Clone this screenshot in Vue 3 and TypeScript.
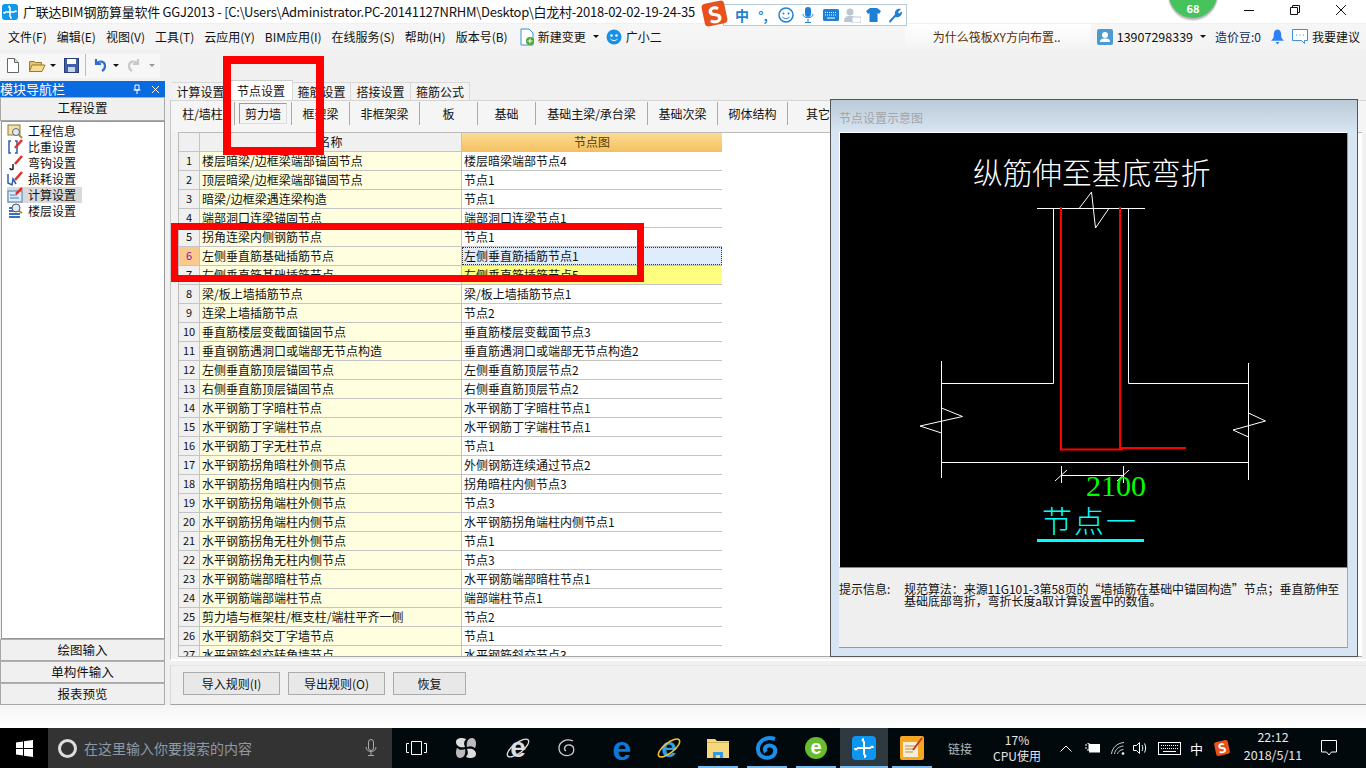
<script setup lang="ts">
const menus: string[] = ['文件(F)', '编辑(E)', '视图(V)', '工具(T)', '云应用(Y)', 'BIM应用(I)', '在线服务(S)', '帮助(H)', '版本号(B)']
const tabs: string[] = ['计算设置', '节点设置', '箍筋设置', '搭接设置', '箍筋公式']
const tabWidths: number[] = [58, 63, 58, 60, 59]
const subs: { t: string; w: number }[] = [
  { t: '柱/墙柱', w: 64 }, { t: '剪力墙', w: 57 }, { t: '框架梁', w: 58 }, { t: '非框架梁', w: 70 },
  { t: '板', w: 58 }, { t: '基础', w: 58 }, { t: '基础主梁/承台梁', w: 112 }, { t: '基础次梁', w: 70 },
  { t: '砌体结构', w: 70 }, { t: '其它', w: 60 },
]
const navItems: string[] = ['工程信息', '比重设置', '弯钩设置', '损耗设置', '计算设置', '楼层设置']
const rows: [string, string][] = [
  ['楼层暗梁/边框梁端部锚固节点', '楼层暗梁端部节点4'],
  ['顶层暗梁/边框梁端部锚固节点', '节点1'],
  ['暗梁/边框梁遇连梁构造', '节点1'],
  ['端部洞口连梁锚固节点', '端部洞口连梁节点1'],
  ['拐角连梁内侧钢筋节点', '节点1'],
  ['左侧垂直筋基础插筋节点', '左侧垂直筋插筋节点1'],
  ['左侧垂直筋基础插筋节点', '左侧垂直筋插筋节点5'],
  ['梁/板上墙插筋节点', '梁/板上墙插筋节点1'],
  ['连梁上墙插筋节点', '节点2'],
  ['垂直筋楼层变截面锚固节点', '垂直筋楼层变截面节点3'],
  ['垂直钢筋遇洞口或端部无节点构造', '垂直筋遇洞口或端部无节点构造2'],
  ['左侧垂直筋顶层锚固节点', '左侧垂直筋顶层节点2'],
  ['右侧垂直筋顶层锚固节点', '右侧垂直筋顶层节点2'],
  ['水平钢筋丁字暗柱节点', '水平钢筋丁字暗柱节点1'],
  ['水平钢筋丁字端柱节点', '水平钢筋丁字端柱节点1'],
  ['水平钢筋丁字无柱节点', '节点1'],
  ['水平钢筋拐角暗柱外侧节点', '外侧钢筋连续通过节点2'],
  ['水平钢筋拐角暗柱内侧节点', '拐角暗柱内侧节点3'],
  ['水平钢筋拐角端柱外侧节点', '节点3'],
  ['水平钢筋拐角端柱内侧节点', '水平钢筋拐角端柱内侧节点1'],
  ['水平钢筋拐角无柱外侧节点', '节点1'],
  ['水平钢筋拐角无柱内侧节点', '节点3'],
  ['水平钢筋端部暗柱节点', '水平钢筋端部暗柱节点1'],
  ['水平钢筋端部端柱节点', '端部端柱节点1'],
  ['剪力墙与框架柱/框支柱/端柱平齐一侧', '节点2'],
  ['水平钢筋斜交丁字墙节点', '节点1'],
  ['水平钢筋斜交转角墙节点', '水平钢筋斜交节点3'],
]
</script>

<template>
  <div class="app">
    <header class="title">
      <svg class="logo" width="16" height="16" viewBox="0 0 16 16">
        <rect width="16" height="16" rx="3" fill="#1296ee" />
        <path d="M8 3V13M3 8h10M8 3.500c-1.500 0-1.500-1.500 0-1.500M3 8c0 1.500-1.500 1.500-1 0M13 8c0-1.500 1.500-1.500 1 0M8 13c1.500 0 1.500 1.500 0 1" stroke="#fff" stroke-width="1.500" fill="none" />
      </svg>
      <span class="title-text">广联达BIM钢筋算量软件 GGJ2013 - [C:\Users\Administrator.PC-20141127NRHM\Desktop\白龙村-2018-02-02-19-24-35</span>
      <div class="winbtns">
        <svg width="12" height="12" viewBox="0 0 12 12"><path d="M1 6.500h10" stroke="#111" /></svg>
        <svg width="12" height="12" viewBox="0 0 12 12"><path d="M1.500 3.500h7v7h-7zM3.500 3.500v-2h7v7h-2" stroke="#111" fill="none" /></svg>
        <svg width="12" height="12" viewBox="0 0 12 12"><path d="M1 1l10 10M11 1L1 11" stroke="#111" /></svg>
      </div>
    </header>

    <nav class="menubar">
      <span v-for="m in menus" :key="m" class="menu-item">{{ m }}</span>
      <svg width="16" height="18" viewBox="0 0 16 18" class="new-ico">
        <path d="M2 1h8l4 4v12H2z" fill="#fff" stroke="#3a8fd8" />
        <circle cx="11" cy="13" r="4" fill="#4da52c" />
        <path d="M11 10.500v5M8.500 13h5" stroke="#fff" />
      </svg>
      <span class="menu-item tight">新建变更</span>
      <span class="caret c1"></span>
      <svg width="16" height="16" viewBox="0 0 16 16" class="gx-ico">
        <circle cx="8" cy="8" r="7.500" fill="#1a8fe6" />
        <circle cx="5.500" cy="6.500" r="1.300" fill="#fff" />
        <circle cx="10.500" cy="6.500" r="1.300" fill="#fff" />
        <path d="M4.500 10c2 2 5 2 7 0" stroke="#fff" fill="none" />
      </svg>
      <span class="menu-item tight">广小二</span>
      <div class="news">为什么筏板XY方向布置..</div>
      <div class="userbar">
        <svg width="16" height="16" viewBox="0 0 16 16">
          <rect width="16" height="16" rx="2" fill="#4d9ad0" />
          <circle cx="8" cy="6" r="3" fill="#fff" />
          <path d="M3 13c0-3 2-3.500 5-3.500s5 .5 5 3.500z" fill="#fff" />
        </svg>
        <span class="phone">13907298339</span>
        <span class="caret c2"></span>
        <span class="bean">造价豆:0</span>
        <svg class="bell" width="13" height="16" viewBox="0 0 14 16">
          <path d="M7 0c3 0 4 3 4 6s1 4 3 6H0c2-2 3-3 3-6s1-6 4-6z" fill="#2f7ff5" />
          <path d="M5 13.500h4L7 16z" fill="#2f7ff5" />
        </svg>
        <svg class="sug" width="16" height="16" viewBox="0 0 16 16">
          <path d="M.5.500h15v11h-3v3l-3-3H.5z" fill="#fff" stroke="#3d8fe0" />
          <path d="M4 6h1M7.500 6h1M11 6h1" stroke="#3d8fe0" />
        </svg>
        <span class="sug-text">我要建议</span>
      </div>
    </nav>

    <div class="toolbar">
      <div class="tool-strip">
        <svg width="12" height="15" viewBox="0 0 12 15" class="t1"><path d="M.5.500h7l4 4v10H.5z" fill="#fff" stroke="#666" /><path d="M7.500.500v4h4" fill="#ddd" stroke="#666" /></svg>
        <svg width="17" height="15" viewBox="0 0 17 15" class="t2"><path d="M.5 3.500h5l1 1h6v9H.5z" fill="#e8c36a" stroke="#9b7a2d" /><path d="M3 7h13l-3 6.500H.5z" fill="#f6dc93" stroke="#9b7a2d" /></svg>
        <span class="caret c3"></span>
        <svg width="15" height="15" viewBox="0 0 15 15" class="t3"><rect x=".5" y=".5" width="14" height="14" fill="#3f5fa8" stroke="#2a3f7a" /><rect x="3" y="1" width="9" height="5" fill="#fff" /><rect x="4" y="9" width="7" height="5" fill="#c9d4e8" /></svg>
        <span class="tool-sep"></span>
        <svg width="14" height="14" viewBox="0 0 14 14" class="t4"><path d="M3 1v5h5M3 6c3-4 9-3 9 2 0 2-1 4-3 5" stroke="#2f6fd0" stroke-width="2.200" fill="none" /></svg>
        <span class="caret c4"></span>
        <svg width="14" height="14" viewBox="0 0 14 14" class="t5"><path d="M11 1v5H6M11 6C8 2 2 3 2 8c0 2 1 4 3 5" stroke="#c9c9c9" stroke-width="2.200" fill="none" /></svg>
        <span class="caret c5"></span>
      </div>
    </div>

    <main class="main">
      <aside class="side">
        <div class="side-head">
          <span>模块导航栏</span>
          <svg width="10" height="10" viewBox="0 0 10 10" class="pin"><path d="M3 1h4v5H3zM1.500 6h7M5 6v4" stroke="#fff" fill="none" /></svg>
          <svg width="9" height="9" viewBox="0 0 9 9" class="close"><path d="M1 1l7 7M8 1L1 8" stroke="#fff" /></svg>
        </div>
        <div class="side-btn first">工程设置</div>
        <ul class="side-list">
          <li v-for="(n, i) in navItems" :key="n" :class="{ sel: i === 4 }">
            <svg width="17" height="16" viewBox="0 0 17 16">
              <template v-if="i === 0">
                <rect x="1" y="2" width="12" height="10" fill="#f3e2a8" stroke="#8a7a3a" />
                <circle cx="9" cy="9" r="3.500" fill="#dfeaf5" stroke="#666" />
                <path d="M12 12l3 3" stroke="#b8862a" stroke-width="2" />
              </template>
              <template v-else-if="i === 4">
                <rect x="1" y="4" width="14" height="11" fill="#dcebfa" stroke="#4a7fb8" />
                <path d="M3 8h7M3 11h9" stroke="#4a7fb8" />
                <path d="M9 7l6-6" stroke="#e0302a" stroke-width="2.500" />
              </template>
              <template v-else-if="i === 5">
                <path d="M2 5h11M2 8h11M2 11h11M2 14h11" stroke="#3a70c0" stroke-width="2" />
                <circle cx="9" cy="5" r="4" fill="#dfeaf5" stroke="#555" />
                <path d="M12 8l3 2" stroke="#b8862a" stroke-width="2" />
              </template>
              <template v-else>
                <path v-if="i === 1" d="M4 2H2v12h2M8 2h2v12H8" stroke="#2f5fa8" stroke-width="1.500" fill="none" />
                <path v-if="i === 2" d="M6 9v5c-2 1-3 0-3-1" stroke="#222" stroke-width="1.500" fill="none" />
                <path v-if="i === 3" d="M1 3v9l4 2 1-6 3 5" stroke="#2f5fa8" stroke-width="1.500" fill="none" />
                <path d="M8 9l7-8" stroke="#e0302a" stroke-width="2.500" />
              </template>
            </svg>
            <span>{{ n }}</span>
          </li>
        </ul>
        <div class="side-btn">绘图输入</div>
        <div class="side-btn">单构件输入</div>
        <div class="side-btn">报表预览</div>
      </aside>

      <section class="work">
        <div class="tabs">
          <span v-for="(t, i) in tabs" :key="t" class="tab" :class="{ active: i === 1 }" :style="{ width: tabWidths[i] + 'px' }">{{ t }}</span>
        </div>
        <div class="pane">
          <div class="subtabs">
            <span v-for="(s, i) in subs" :key="s.t" class="sub" :style="{ width: s.w + 'px' }">
              <span :class="{ pressed: i === 1 }">{{ s.t }}</span>
            </span>
          </div>
          <div class="grid">
            <div class="row head">
              <span class="num"></span>
              <span class="name-h">名称</span>
              <span class="val-h">节点图</span>
            </div>
            <div v-for="(r, i) in rows" :key="i" class="row">
              <span class="num" :class="{ cur: i === 5 }">{{ i + 1 }}</span>
              <span class="name">{{ r[0] }}</span>
              <span class="val" :class="{ focus: i === 5, warn: i === 6 }">{{ r[1] }}</span>
            </div>
          </div>

          <div class="panel">
            <div class="panel-title">节点设置示意图</div>
            <div class="canvas">
              <svg width="507" height="434" viewBox="840 133 507 434">
                <text x="973" y="184" class="c-title">纵筋伸至基底弯折</text>
                <g stroke="#fff" fill="none">
                  <path d="M1037 208.500H1145M1053.500 208V383.500H941.500M1128.500 208V383.500H1248.500M941.500 361V478M1248.500 363V480M941.500 462.500H1248.500" />
                  <path d="M1079.500 208L1091.500 192L1095.500 228L1108.500 209" />
                  <path d="M941.500 408L962.500 416.500L920 426L941.500 433M1248.500 413L1265.500 421L1233 430L1248.500 437" />
                  <path d="M1061.500 466V483M1123.500 466V483M1061.500 475.500H1123.500M1055 481L1067 470M1117 481L1129 470" />
                </g>
                <g stroke="#f00" stroke-width="2" fill="none">
                  <path d="M1061 207V449.500H1123" />
                  <path d="M1120 207V448H1186" />
                </g>
                <text x="1086" y="496" class="c-num">2100</text>
                <text x="1042" y="532" class="c-node">节点一</text>
                <rect x="1037" y="539" width="107" height="3" fill="#0ff" />
              </svg>
            </div>
            <div class="info">
              <span class="info-label">提示信息:</span>
              <p>规范算法：来源11G101-3第58页的“墙插筋在基础中锚固构造”节点；垂直筋伸至<br />基础底部弯折，弯折长度a取计算设置中的数值。</p>
            </div>
          </div>
        </div>
        <div class="actions">
          <button class="b1">导入规则(I)</button>
          <button class="b1">导出规则(O)</button>
          <button class="b2">恢复</button>
        </div>
      </section>
    </main>

    <div class="spacer"></div>

    <footer class="taskbar">
      <div class="start">
        <svg width="17" height="17" viewBox="0 0 17 17"><path d="M0 2.500l7-1v6.500H0zM8 1.300L17 0v8H8zM0 9h7v6.500l-7-1zM8 9h9v8l-9-1.300z" fill="#fff" /></svg>
      </div>
      <div class="search">
        <span class="cortana"></span>
        <span class="s-text">在这里输入你要搜索的内容</span>
        <svg width="12" height="18" viewBox="0 0 12 18" class="mic"><rect x="3.500" y=".5" width="5" height="11" rx="2.500" fill="none" stroke="#aaa" /><path d="M1 8c0 6 10 6 10 0M6 13v3M3 16.500h6" stroke="#aaa" fill="none" /></svg>
      </div>
      <div class="slot"><svg width="21" height="14" viewBox="0 0 21 14"><path d="M5.500.5h10v13h-10zM3 2.500H.5v9H3M18 2.500h2.500v9H18" stroke="#fff" fill="none" /></svg></div>
      <div class="slot m2"><svg width="22" height="22" viewBox="0 0 22 22"><path d="M10 10C5 11 1 9 1 5s6-5 10-3c-1 2-3 3-1 8zM12 12c5-1 9 1 9 5s-6 5-10 3c1-2 3-3 1-8z" fill="#ddd" /><path d="M12 10c-1-5 1-9 5-9s5 6 3 10c-2-1-3-3-8-1zM10 12c1 5-1 9-5 9s-5-6-3-10c2 1 3 3 8 1z" fill="#bbb" /></svg></div>
      <div class="slot m4">
        <svg width="26" height="26" viewBox="0 0 26 26">
          <text x="13" y="22" text-anchor="middle" class="ie-t" fill="#ddd">e</text>
          <ellipse cx="13" cy="13" rx="13" ry="5" transform="rotate(-38 13 13)" fill="none" stroke="#ddd" stroke-width="1.300" />
        </svg>
      </div>
      <div class="slot m1"><svg width="20" height="20" viewBox="0 0 20 20"><path d="M16 3C9 0 2 4 2 10s6 9 11 7 5-9 0-10-7 4-4 6" stroke="#ccc" stroke-width="1.300" fill="none" /></svg></div>
      <div class="slot m7"><span class="edge">e</span></div>
      <div class="slot m-1">
        <svg width="26" height="26" viewBox="0 0 26 26">
          <text x="13" y="22" text-anchor="middle" class="ie-t" fill="#2f9fe8">e</text>
          <ellipse cx="13" cy="13" rx="13" ry="5" transform="rotate(-38 13 13)" fill="none" stroke="#f2c230" stroke-width="1.500" />
        </svg>
      </div>
      <div class="slot m1 run"><svg width="22" height="20" viewBox="0 0 22 20"><path d="M0 1h8l2 2h12v17H0z" fill="#f5d77f" /><rect x="0" y="4" width="22" height="1" fill="#d8b354" /><path d="M6 20v-6h10v6h-3v-3H9v3z" fill="#2d9ce0" /></svg></div>
      <div class="slot m1 run"><svg width="24" height="24" viewBox="0 0 24 24"><path d="M20 3C11 0 3 5 3 13s8 10 13 8 6-9 1-11-9 2-6 6" stroke="#1c8fe8" stroke-width="4" fill="none" /></svg></div>
      <div class="slot m1 run"><span class="green">e</span></div>
      <div class="slot active run"><svg width="24" height="24" viewBox="0 0 24 24"><rect width="24" height="24" rx="4" fill="#0c96f0" /><path d="M12 5v14M5 12h14M12 5c-2 0-2-2 0-2M5 12c0 2-2 2-2 0M19 12c0-2 2-2 2 0M12 19c2 0 2 2 0 2" stroke="#fff" stroke-width="2" fill="none" /></svg></div>
      <div class="slot run"><svg width="24" height="24" viewBox="0 0 24 24"><rect width="24" height="24" rx="2" fill="#f5a623" /><rect x="3" y="6" width="15" height="15" fill="#f7eed7" /><path d="M5 10h10M5 13h10M5 16h8" stroke="#b98b50" /><path d="M13 14l9-12" stroke="#c0392b" stroke-width="2" /></svg></div>
      <div class="tray">
        <span class="link">链接</span>
        <div class="cpu"><span>17%</span><span>CPU使用</span></div>
        <svg class="tr up" width="12" height="7" viewBox="0 0 12 7"><path d="M.5 6.500L6 1l5.500 5.500" stroke="#fff" fill="none" /></svg>
        <svg class="tr bat" width="16" height="10" viewBox="0 0 16 10"><path d="M0 2h2M0 5h2M2 0h2v7H2" stroke="#fff" fill="none" /><rect x="4.500" y="1.500" width="10" height="7.500" stroke="#fff" fill="#fff" /></svg>
        <svg class="tr wifi" width="14" height="13" viewBox="0 0 14 13"><path d="M.5 12C1 6 6 1 13 .5M3.500 12c.5-4 3.500-7.500 9-8M6.500 12c.5-2 2-4 6-4.500" stroke="#ccc" fill="none" /><circle cx="12" cy="11.500" r="1.300" fill="#fff" /></svg>
        <svg class="tr vol" width="16" height="12" viewBox="0 0 16 12"><path d="M.5 3.500h3l3-3v11l-3-3h-3z" stroke="#fff" fill="none" /><path d="M9 3c1 2 1 4 0 6M11.500 1.500c1.500 3 1.500 6 0 9" stroke="#fff" fill="none" /></svg>
        <svg class="tr kbd" width="23" height="13" viewBox="0 0 23 13"><rect x=".5" y=".5" width="22" height="12" fill="none" stroke="#fff" /><path d="M3 3.500h17M3 6.500h17" stroke="#fff" stroke-dasharray="1 1" /><path d="M5 9.500h13" stroke="#fff" /></svg>
        <span class="zh">中</span>
        <span class="sg">S</span>
        <div class="clock"><span>22:12</span><span>2018/5/11</span></div>
        <svg class="tr notif" width="16" height="16" viewBox="0 0 16 16"><path d="M.5.500h15v11.500h-5l-2.500 3-2.500-3h-5z" fill="none" stroke="#fff" /></svg>
      </div>
    </footer>

    <div class="badge68"><span>68</span></div>

    <div class="sogou">
      <span class="sg big">S</span>
      <span class="sg-bar">
        <b class="sg-zh">中</b>
        <span class="sg-dot">°,</span>
        <svg class="g1" width="16" height="16" viewBox="0 0 16 16"><circle cx="8" cy="8" r="7" fill="none" stroke="#1d7fd6" stroke-width="1.500" /><circle cx="5.500" cy="6.500" r="1" fill="#1d7fd6" /><circle cx="10.500" cy="6.500" r="1" fill="#1d7fd6" /><path d="M4.500 10c2 2 5 2 7 0" stroke="#1d7fd6" fill="none" /></svg>
        <svg class="g2" width="12" height="16" viewBox="0 0 12 16"><rect x="3" y="0" width="6" height="10" rx="3" fill="#1d7fd6" /><path d="M1 7c0 5 10 5 10 0M6 12v3M3 15.500h6" stroke="#1d7fd6" fill="none" /></svg>
        <svg class="g3" width="16" height="12" viewBox="0 0 16 12"><rect width="16" height="12" rx="1.500" fill="#1d7fd6" /><path d="M2 3.500h12M2 6h12" stroke="#fff" stroke-dasharray="1 1" /><path d="M4 9h8" stroke="#fff" /></svg>
        <svg class="gm" width="17" height="15" viewBox="0 0 17 15"><circle cx="6" cy="4" r="3.500" fill="#b9c6d3" /><path d="M0 14c0-5 2-6 6-6s6 1 6 6z" fill="#b9c6d3" /><rect x="8" y="9" width="9" height="6" fill="#fff" stroke="#b9c6d3" /></svg>
        <svg class="gm" width="15" height="14" viewBox="0 0 15 14"><path d="M4 0h7l4 3-2 3-1.500-1v9h-8V5L2 6 0 3z" fill="#1d7fd6" /></svg>
        <svg width="15" height="15" viewBox="0 0 15 15"><path d="M2 13L8 6.500C7 3 10 0 14 1l-3 3 1 1.500 3-2c.5 4-3 6.500-6.500 5.500L3 15z" fill="#1d7fd6" /></svg>
      </span>
    </div>

    <div class="red r1"></div>
    <div class="red r2"></div>
  </div>
</template>

<style scoped>
.app {
  position: relative;
  width: 1366px;
  height: 768px;
  overflow: hidden;
  display: flex;
  flex-direction: column;
  background: #f0f0f0;
  font-family: "Noto Sans CJK SC", "Liberation Sans", sans-serif;
  font-size: 12px;
  color: #111;
}
.title {
  height: 23px;
  flex: none;
  background: #fff;
  display: flex;
  align-items: center;
  padding-left: 2px;
}
.logo { flex: none; }
.title-text { margin-left: 5px; font-size: 13px; letter-spacing: -0.25px; line-height: 23px; white-space: nowrap; width: 690px; }
.winbtns { margin-left: auto; display: flex; gap: 34px; padding-right: 19px; margin-top: -3px; }

.menubar {
  height: 27px;
  flex: none;
  display: flex;
  align-items: center;
  padding-left: 8px;
  padding-bottom: 1px;
  box-sizing: border-box;
  border-top: 1px solid #f0f0f0;
  background: linear-gradient(#f6f6f6, #f3f3f3);
}
.menu-item { margin-right: 10px; white-space: nowrap; }
.menu-item.tight { margin-right: 0; }
.new-ico { margin: 0 3px 0 1px; }
.caret {
  width: 0;
  height: 0;
  border-left: 3px solid transparent;
  border-right: 3px solid transparent;
  border-top: 3px solid #111;
  display: inline-block;
  flex: none;
}
.c1 { margin: 0 7px 0 7px; }
.gx-ico { margin-right: 4px; }
.news {
  margin-left: 243px;
  width: 186px;
  flex: none;
  height: 26px;
  line-height: 26px;
  padding-left: 28px;
  box-sizing: border-box;
  color: #5a2d00;
  background: linear-gradient(#fff, #f3f3f3);
  white-space: nowrap;
}
.userbar { display: flex; align-items: center; padding-left: 6px; white-space: nowrap; }
.phone { margin-left: 4px; font-size: 12.500px; }
.c2 { margin: 0 9px 0 7px; }
.bean { color: #0d2a55; }
.bell { margin-left: 10px; }
.sug { margin-left: 8px; }
.sug-text { margin-left: 4px; }

.toolbar { height: 30px; flex: none; padding-top: 4px; box-sizing: border-box; }
.tool-strip {
  width: 160px;
  height: 24px;
  background: #f7f7f7;
  display: flex;
  align-items: center;
  padding-bottom: 2px;
  box-sizing: border-box;
}
.t1 { margin-left: 7px; }
.t2 { margin-left: 10px; }
.c3 { margin-left: 4px; }
.t3 { margin-left: 8px; }
.tool-sep { width: 1px; height: 22px; background: #bbb; margin-left: 6px; }
.t4 { margin-left: 7px; }
.c4 { margin-left: 6px; }
.t5 { margin-left: 8px; }
.c5 { margin-left: 8px; border-top-color: #999; }

.main { height: 625px; flex: none; display: flex; gap: 5px; }
.side { width: 165px; flex: none; display: flex; flex-direction: column; }
.side-head {
  height: 16px;
  margin-top: 1px;
  background: #0a6ae0;
  color: #fff;
  font-size: 13px;
  line-height: 14px;
  display: flex;
  align-items: center;
  white-space: nowrap;
}
.pin { margin-left: 67px; }
.close { margin-left: 9px; }
.side-btn {
  height: 22px;
  flex: none;
  box-sizing: border-box;
  border: 1px solid #a8a8a8;
  border-top-color: #b0b0b0;
  text-align: center;
  line-height: 20px;
  font-size: 12.500px;
  background: #f0f0f0;
}
.side-btn.first { margin-top: 0; height: 24px; line-height: 20px; }
.side-list {
  list-style: none;
  margin: 0;
  padding: 1px 0 0 5px;
  flex: 1;
  background: #fff;
  border: 1px solid #999;
  margin-left: 1px;
}
.side-list li {
  height: 16px;
  width: 75px;
  display: flex;
  align-items: center;
  gap: 4px;
  white-space: nowrap;
  line-height: 16px;
}
.side-list li.sel { background: #d9d9d9; }

.work { flex: 1; min-width: 0; display: flex; flex-direction: column; }
.tabs { height: 19px; flex: none; display: flex; padding-left: 2px; align-items: flex-end; margin-top: 1px; }
.tab {
  height: 18px;
  box-sizing: border-box;
  text-align: center;
  line-height: 17px;
  border: 1px solid #d8d8d8;
  border-bottom: 0;
  border-left: 0;
  background: #f3f3f3;
}
.tab.active { height: 20px; background: #fff; line-height: 19px; border-top-color: #ccc; }
.pane {
  position: relative;
  height: 561px;
  flex: none;
  box-sizing: border-box;
  border-top: 1px solid #d5d5d5;
  border-left: 1px solid #c8c8c8;
  border-bottom: 2px solid #fff;
  background: #f2f2f2;
}
.subtabs { height: 31px; display: flex; background: #f5f5f5; padding-top: 1px; box-sizing: border-box; }
.sub {
  height: 23px;
  box-sizing: border-box;
  display: flex;
  justify-content: center;
  align-items: center;
  border-right: 1px solid #aaa;
  white-space: nowrap;
  flex: none;
}
.sub:last-child { border-right: 0; }
.sub .pressed {
  border: 1px solid #999;
  border-right-color: #ddd;
  border-bottom-color: #ddd;
  padding: 1px 5px;
  line-height: 17px;
  background: #f4f4f4;
}
.grid {
  margin-left: 7px;
  margin-right: 4px;
  height: 525px;
  overflow: hidden;
  background: #fff;
  border-left: 1px solid #bbb;
  border-top: 1px solid #bbb;
  border-bottom: 1px solid #a8a8a8;
  box-sizing: border-box;
}
.row {
  display: grid;
  grid-template-columns: 21px 262px 260px;
  width: 543px;
  height: 19px;
  box-sizing: border-box;
  border-bottom: 1px solid #c4c4c4;
  border-right: 1px solid #c4c4c4;
  line-height: 17px;
  white-space: nowrap;
}
.row > span { display: block; overflow: hidden; }
.num { background: #f0f0f0; text-align: center; border-right: 1px solid #c4c4c4; font-size: 11px; }
.num.cur { background: #fbc98c; color: #7a1fa0; }
.name { background: #ffffdf; padding-left: 2px; border-right: 1px solid #c4c4c4; }
.val { padding-left: 2px; background: #fff; }
.val.focus { background: #deecfc; outline: 1px dotted #333; outline-offset: -1px; }
.val.warn { background: #ffff7f; }
.head .name-h { background: #f0f0f0; text-align: center; border-right: 1px solid #c4c4c4; }
.head .val-h { background: linear-gradient(#fcdc92, #f4c263); text-align: center; color: #5a3a00; }

.panel {
  position: absolute;
  left: 659px;
  top: -2px;
  width: 528px;
  height: 558px;
  box-sizing: border-box;
  border: 1px solid #555;
  background: linear-gradient(#bccbd9, #d7e4f2 32px, #d7e4f2);
  padding: 0 9px 8px 8px;
  display: flex;
  flex-direction: column;
}
.panel-title { height: 32px; line-height: 35px; color: #a4a4a4; flex: none; }
.canvas {
  height: 436px;
  flex: none;
  background: #000;
  border-top: 1px solid #fff;
  border-left: 1px solid #fff;
  border-right: 1px solid #999;
  border-bottom: 1px solid #888;
  box-sizing: border-box;
}
.canvas svg { display: block; }
.c-title { fill: #fff; font-size: 29.700px; font-family: "Noto Sans CJK SC", sans-serif; font-weight: 300; }
.c-num { fill: #0f0; font-size: 30px; font-family: "Liberation Serif", serif; }
.c-node { fill: #0ff; font-size: 30px; letter-spacing: 2px; font-family: "Noto Sans CJK SC", sans-serif; font-weight: 300; }
.info {
  flex: 1;
  background: #efefef;
  border-bottom: 1px solid #999;
  border-right: 1px solid #aaa;
  display: flex;
  padding-top: 15px;
  box-sizing: border-box;
}
.info-label { width: 65px; flex: none; box-sizing: border-box; line-height: 12px; }
.info p { margin: 0; line-height: 12px; white-space: nowrap; letter-spacing: -0.06px; }

.actions {
  height: 40px;
  margin-top: 4px;
  flex: none;
  box-sizing: border-box;
  border-bottom: 1px solid #a0a0a0;
  border-left: 1px solid #d8d8d8;
  border-top: 1px solid #e4e4e4;
  display: flex;
  gap: 8px;
  padding: 6px 0 0 12px;
  background: #f0f0f0;
}
.actions button {
  height: 23px;
  border: 1px solid #ababab;
  background: #e8e8e8;
  font: inherit;
  color: #111;
  padding: 0;
}
.b1 { width: 97px; }
.b2 { width: 73px; }

.spacer { height: 23px; flex: none; background: linear-gradient(#f5f5f5, #fff); }

.taskbar { height: 40px; flex: none; display: flex; background: #02090d; color: #eee; position: relative; }
.start { width: 48px; flex: none; background: #000; display: flex; align-items: center; justify-content: center; }
.search { width: 344px; flex: none; background: #333; display: flex; align-items: center; padding-left: 10px; box-sizing: border-box; }
.cortana { width: 19px; height: 19px; box-sizing: border-box; border: 3px solid #ddd; border-radius: 50%; flex: none; }
.s-text { margin-left: 7px; color: #8d9aa5; font-size: 14px; }
.mic { margin-left: auto; margin-right: 15px; }
.slot { width: 48px; flex: none; display: flex; align-items: center; justify-content: center; position: relative; }
.m2 { margin-left: 2px; }
.m4 { margin-left: 4px; }
.m1 { margin-left: 1px; }
.m7 { margin-left: 7px; }
.m-1 { margin-left: -1px; }
.slot.active { background: #2f3a40; }
.run::after {
  content: "";
  position: absolute;
  left: 4px;
  right: 4px;
  bottom: 0;
  height: 2px;
  background: #76b9ed;
}
.active.run::after { left: 0; right: 0; }
.ie-t { font: 700 28px "Liberation Sans", sans-serif; }
.edge { color: #0c78d8; font: 700 34px/30px "Liberation Sans", sans-serif; }
.green {
  color: #fff;
  font: 700 20px/20px "Liberation Sans", sans-serif;
  width: 22px;
  height: 22px;
  text-align: center;
  border-radius: 50%;
  background: #67bd2f;
}
.tray { display: flex; align-items: center; flex: 1; min-width: 0; color: #e6e6e6; }
.link { width: 48px; text-align: center; flex: none; color: #b8b8b8; }
.cpu { width: 66px; display: flex; flex-direction: column; align-items: center; line-height: 16px; flex: none; font-size: 12px; }
.up { margin-left: 10px; }
.bat { margin-left: 13px; }
.wifi { margin-left: 10px; }
.vol { margin-left: 8px; }
.kbd { margin-left: 9px; }
.zh { margin-left: 9px; color: #fff; font-size: 13px; }
.sg {
  margin-left: 12px;
  width: 14px;
  height: 14px;
  line-height: 14px;
  text-align: center;
  background: #e8501c;
  color: #fff;
  font-weight: 700;
  font-size: 13px;
  border-radius: 2px;
  transform: rotate(-12deg);
  flex: none;
}
.clock { width: 82px; margin-left: 3px; padding-bottom: 4px; display: flex; flex-direction: column; align-items: center; line-height: 18px; flex: none; font-size: 12.500px; }
.notif { margin-left: 7px; }

.badge68 {
  position: absolute;
  left: 1169px;
  top: -30px;
  width: 48px;
  height: 48px;
  border-radius: 50%;
  background: #46c35c;
  box-shadow: 0 0 0 1px #bbb, 0 2px 2px #aaa;
  color: #fff;
  font-weight: 700;
  font-size: 11px;
  text-align: center;
}
.badge68 span { position: absolute; left: 0; right: 0; bottom: 3px; line-height: 14px; }

.sogou { position: absolute; left: 703px; top: 0; height: 27px; display: flex; align-items: center; }
.sg.big {
  margin: 0;
  width: 23px;
  height: 23px;
  line-height: 23px;
  font-size: 22px;
  position: relative;
  z-index: 1;
  border-radius: 4px;
}
.sg-bar {
  margin-left: -3px;
  width: 184px;
  height: 22px;
  margin-top: 3px;
  box-sizing: border-box;
  background: #fff;
  border: 1px solid #b7c8d8;
  display: flex;
  align-items: center;
  gap: 6px;
  padding-left: 11px;
}
.sg-zh { color: #1d7fd6; font-size: 14px; }
.sg-dot { color: #1d7fd6; font-weight: 700; font-size: 13px; width: 16px; text-align: center; }
.g1 { margin-left: 1px; }
.g2 { margin-left: 2px; }
.g3 { margin-left: 3px; }
.gm { margin-left: -1px; }

.red { position: absolute; box-sizing: border-box; border: 7px solid #f00; }
.r1 { left: 223px; top: 56px; width: 101px; height: 99px; border-width: 8px; }
.r2 { left: 171px; top: 223px; width: 473px; height: 59px; }
</style>
